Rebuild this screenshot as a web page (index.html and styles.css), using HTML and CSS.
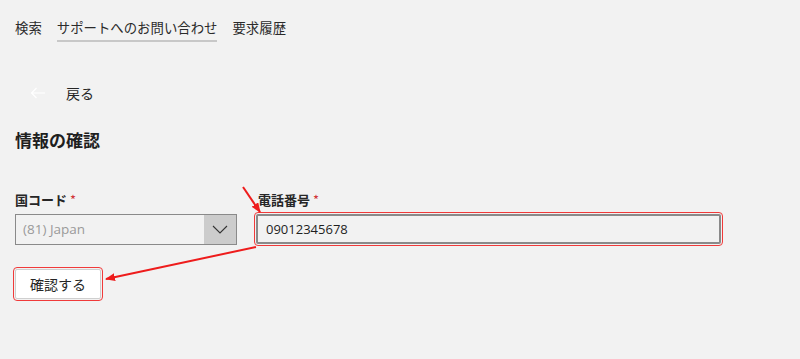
FILE: index.html
```html
<!DOCTYPE html>
<html lang="ja">
<head>
<meta charset="utf-8">
<title>情報の確認</title>
<link rel="stylesheet" href="styles.css">
</head>
<body>
<div class="page">
  <nav class="tabs">
    <a class="tab">検索</a>
    <a class="tab active">サポートへのお問い合わせ</a>
    <a class="tab">要求履歴</a>
  </nav>

  <div class="back">
    <svg class="back-icon" width="16" height="12" viewBox="0 0 16 12"><path d="M15 6H1.5M6.5 1L1.5 6l5 5" fill="none" stroke="#ffffff" stroke-width="1.2"/></svg>
    <span class="back-text">戻る</span>
  </div>

  <h1 class="title">情報の確認</h1>

  <div class="fields">
    <div class="field country">
      <label class="label">国コード <span class="req">*</span></label>
      <div class="select">
        <span class="select-value">(81) Japan</span>
        <span class="select-btn">
          <svg width="16" height="9" viewBox="0 0 16 9"><path d="M1 1l7 7 7-7" fill="none" stroke="#333" stroke-width="1.1"/></svg>
        </span>
      </div>
    </div>
    <div class="field phone">
      <label class="label">電話番号 <span class="req">*</span></label>
      <div class="input hl">09012345678</div>
    </div>
  </div>

  <button class="confirm hl">確認する</button>

  <svg class="annot" width="800" height="359" viewBox="0 0 800 359">
    <defs>
      <marker id="ah" markerWidth="10" markerHeight="8" refX="9" refY="4" orient="auto" markerUnits="userSpaceOnUse">
        <path d="M0 0L10 4L0 8z" fill="#ee1c1c"/>
      </marker>
    </defs>
    <line x1="243" y1="187" x2="260" y2="212" stroke="#ee1c1c" stroke-width="2" marker-end="url(#ah)"/>
    <line x1="256" y1="247" x2="106" y2="279" stroke="#ee1c1c" stroke-width="2" marker-end="url(#ah)"/>
  </svg>
</div>
</body>
</html>
```

FILE: styles.css
```css
html, body {
  margin: 0;
  padding: 0;
  background: #f2f2f2;
}
body {
  font-family: "Noto Sans CJK JP", "Noto Sans", sans-serif;
  color: #262626;
  font-size: 14px;
}
.page {
  position: relative;
  width: 800px;
  height: 359px;
  padding: 0 15px;
  box-sizing: border-box;
  overflow: hidden;
}
.tabs {
  display: flex;
  gap: 15px;
  padding-top: 14px;
}
.tab {
  line-height: 26px;
  border-bottom: 2px solid transparent;
  font-size: 13.4px;
  color: #2b2b2b;
}
.tab.active {
  border-bottom-color: #c8c8c8;
}
.back {
  display: flex;
  align-items: center;
  margin-top: 41px;
  height: 20px;
  padding-left: 15px;
}
.back-icon {
  display: block;
}
.back-text {
  margin-left: 20px;
  font-size: 14px;
  line-height: 20px;
}
.title {
  margin: 25px 0 0;
  font-size: 17px;
  line-height: 24px;
  font-weight: 700;
  color: #1f1f1f;
}
.fields {
  display: flex;
  gap: 19px;
  margin-top: 38px;
  align-items: flex-start;
}
.field {
  display: flex;
  flex-direction: column;
}
.label {
  font-size: 13px;
  line-height: 20px;
  font-weight: 600;
  color: #262626;
  margin-bottom: 4px;
}
.req {
  color: #d13438;
  font-weight: 400;
}
.select {
  width: 222px;
  height: 31px;
  box-sizing: border-box;
  border: 1px solid #8a8a8a;
  background: #f2f2f2;
  display: flex;
  align-items: stretch;
}
.select-value {
  flex: 1;
  padding-left: 7px;
  line-height: 29px;
  font-family: "Open Sans", "Noto Sans", sans-serif;
  font-size: 13.5px;
  color: #9a9a9a;
}
.select-btn {
  width: 32px;
  background: #cccccc;
  display: flex;
  align-items: center;
  justify-content: center;
}
.select-btn svg {
  display: block;
}
.phone .label {
  margin-left: 2px;
}
.input {
  width: 465px;
  height: 30px;
  box-sizing: border-box;
  border: 2px solid #8a8a8a;
  background: #f2f2f2;
  padding-left: 8px;
  line-height: 26px;
  font-family: "Open Sans", "Noto Sans", sans-serif;
  font-size: 13px;
  color: #1f1f1f;
}
.hl {
  outline: 1.5px solid #f03a3a;
  outline-offset: 1px;
  border-radius: 2px;
}
.confirm {
  display: block;
  margin-top: 24px;
  width: 86px;
  height: 30px;
  box-sizing: border-box;
  border: 1px solid #cfcfcf;
  background: #ffffff;
  font-family: "Noto Sans CJK JP", sans-serif;
  font-size: 14px;
  color: #262626;
  padding: 0;
}
.annot {
  position: absolute;
  left: 0;
  top: 0;
  pointer-events: none;
}
```
